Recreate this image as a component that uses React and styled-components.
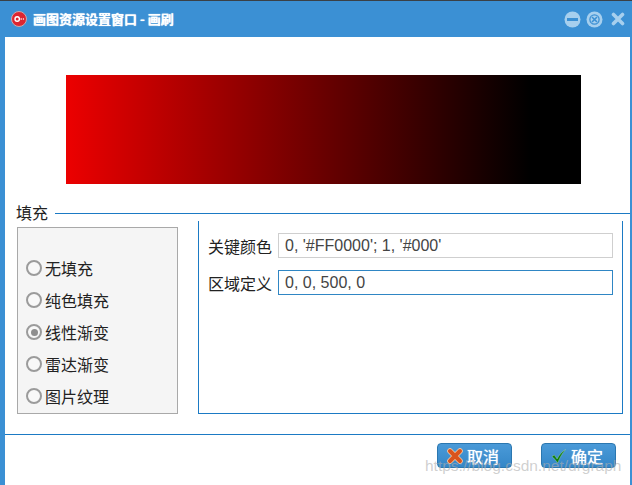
import React from "react";
import styled, { createGlobalStyle } from "styled-components";

const Global = createGlobalStyle`
  html, body { margin: 0; padding: 0; background: #fff; }
  body { font-family: "Liberation Sans", "Noto Sans CJK SC", sans-serif; }
`;

const Win = styled.div`
  position: relative;
  width: 632px;
  height: 485px;
  box-sizing: border-box;
  display: flex;
  flex-direction: column;
  border-top: 1px solid #3a4046;
  background: #fff;
  overflow: hidden;
`;
const TitleBar = styled.div`
  height: 36px;
  flex: none;
  background: #3b90d4;
  display: flex;
  align-items: center;
  padding: 0 7px 0 11px;
  gap: 6px;
`;
const Title = styled.div`
  flex: 1;
  color: #fff;
  font: bold 13px "Noto Sans CJK SC", sans-serif;
  text-shadow: 0 0 1px #fff;
  white-space: nowrap;
  position: relative;
  top: -1px;
`;
const WinButtons = styled.div`
  display: flex;
  align-items: center;
  gap: 5px;
`;
const Body = styled.div`
  flex: 1;
  display: flex;
  flex-direction: column;
  border-left: 5px solid #3b90d4;
  border-right: 2px solid #3b90d4;
  min-height: 0;
`;
const Preview = styled.div`
  height: 109px;
  margin: 38px 49px 0 61px;
  background: linear-gradient(90deg, #ec0000 0%, #000 90%);
  flex: none;
`;
const Legend = styled.div`
  display: flex;
  align-items: center;
  margin: 20px 0 0 11px;
  height: 18px;
  gap: 7px;
  flex: none;
`;
const LegendText = styled.span`
  font: 16px/16px "Noto Sans CJK SC", sans-serif;
  color: #222;
  position: relative;
  top: -1px;
`;
const LegendLine = styled.div`
  flex: 1;
  height: 1px;
  background: #1b7ac4;
`;
const Columns = styled.div`
  display: flex;
  height: 192px;
  margin-top: -1px;
  flex: none;
`;
const LeftPanel = styled.div`
  box-sizing: border-box;
  width: 161px;
  height: 187px;
  margin: 6px 0 0 12px;
  background: #f5f5f5;
  border: 1px solid #a9a9a9;
  padding: 24px 0 0 8px;
  display: flex;
  flex-direction: column;
`;
const RadioRow = styled.label`
  display: flex;
  align-items: center;
  height: 32px;
  gap: 3px;
  font: 16px/28px "Noto Sans CJK SC", sans-serif;
  color: #222;
`;
const RadioDot = styled.span`
  box-sizing: border-box;
  width: 16px;
  height: 16px;
  border-radius: 50%;
  border: 2.5px solid #9b9b9b;
  background: #f8f8f8;
  display: flex;
  align-items: center;
  justify-content: center;
  &::after {
    content: "";
    width: 7px;
    height: 7px;
    border-radius: 50%;
    background: ${(p) => (p.$on ? "#8f8f8f" : "transparent")};
  }
`;
const RightPanel = styled.div`
  box-sizing: border-box;
  width: 425px;
  height: 193px;
  margin-left: 20px;
  border: 1px solid #1b7ac4;
  border-top: none;
  padding: 12px 9px 0 9px;
  display: flex;
  flex-direction: column;
  gap: 12px;
`;
const Field = styled.div`
  display: flex;
  align-items: center;
  gap: 6px;
`;
const FieldLabel = styled.span`
  width: 64px;
  flex: none;
  font: 16px/27px "Noto Sans CJK SC", sans-serif;
  height: 25px;
  color: #222;
  white-space: nowrap;
`;
const Input = styled.div`
  box-sizing: border-box;
  width: 335px;
  height: 25px;
  border: 1px solid ${(p) => (p.$focus ? "#2f86c4" : "#cfcfcf")};
  padding-left: 6px;
  font: 16px/24px "Liberation Sans", sans-serif;
  color: #444;
  white-space: nowrap;
`;
const FooterLine = styled.div`
  height: 1px;
  background: #1b7ac4;
  margin-top: 21px;
  flex: none;
`;
const Footer = styled.div`
  display: flex;
  justify-content: flex-end;
  gap: 29px;
  padding: 8px 14px 0 0;
`;
const Btn = styled.div`
  box-sizing: border-box;
  width: 75px;
  height: 25px;
  border: 1px solid #2b77b0;
  border-radius: 4px;
  background: linear-gradient(#4a9ad8, #3587c8);
  color: #fff;
  display: flex;
  align-items: center;
  padding-left: 9px;
  gap: 4px;
  font: 16px/22px "Noto Sans CJK SC", sans-serif;
  text-shadow: 0 0 1px #fff;
`;
const Watermark = styled.div`
  position: absolute;
  left: 425px;
  top: 455px;
  font: 15.5px/20px "Liberation Sans", sans-serif;
  color: rgba(175, 175, 175, 0.6);
  white-space: nowrap;
`;

const AppIcon = () => (
  <svg width="16" height="16" viewBox="0 0 16 16">
    <circle cx="8" cy="8" r="7.5" fill="#dd2530" stroke="#c9a9ad" />
    <circle cx="6.2" cy="8" r="2.2" fill="none" stroke="#fff" strokeWidth="1.4" />
    <circle cx="10.2" cy="8" r="0.8" fill="#fff" />
    <circle cx="12.4" cy="8" r="0.7" fill="#fff" />
  </svg>
);
const MinIcon = () => (
  <svg width="17" height="17" viewBox="0 0 17 17">
    <circle cx="8.5" cy="8.5" r="8" fill="#a6cfee" />
    <rect x="3" y="7" width="11" height="3" fill="#3b90d4" />
  </svg>
);
const RestoreIcon = () => (
  <svg width="17" height="17" viewBox="0 0 17 17">
    <circle cx="8.5" cy="8.5" r="8" fill="#a6cfee" />
    <circle cx="8.5" cy="8.5" r="4.6" fill="none" stroke="#3b90d4" strokeWidth="1.3" />
    <path d="M6 6l5 5M11 6l-5 5" stroke="#3b90d4" strokeWidth="1.6" />
  </svg>
);
const CloseIcon = () => (
  <svg width="14" height="14" viewBox="0 0 14 14" style={{ marginLeft: 3 }}>
    <path d="M2.5 2.5l9 9M11.5 2.5l-9 9" stroke="#a6cfee" strokeWidth="3.6" strokeLinecap="round" />
  </svg>
);
const CancelIcon = () => (
  <svg width="16" height="16" viewBox="0 0 16 16">
    <path d="M3 3l10 10M13 3L3 13" stroke="#f6c7a0" strokeWidth="5.6" strokeLinecap="round" />
    <path d="M3 3l10 10M13 3L3 13" stroke="#d9541e" strokeWidth="4" strokeLinecap="round" />
  </svg>
);
const OkIcon = () => (
  <svg width="16" height="16" viewBox="0 0 17 16">
    <path d="M1 8.5l2.5-1.5 3 4.2C8.5 7 11.5 3.5 15.5 1 12 5 9.5 9.5 7 15.5 5 12.5 3.2 10.3 1 8.5z" fill="#0b7d0b" stroke="#bfe0b0" strokeWidth="0.4" />
  </svg>
);

const fills = ["无填充", "纯色填充", "线性渐变", "雷达渐变", "图片纹理"];

export default function App() {
  return (
    <Win>
      <Global />
      <TitleBar>
        <AppIcon />
        <Title>画图资源设置窗口 - 画刷</Title>
        <WinButtons>
          <MinIcon />
          <RestoreIcon />
          <CloseIcon />
        </WinButtons>
      </TitleBar>
      <Body>
        <Preview />
        <Legend>
          <LegendText>填充</LegendText>
          <LegendLine />
        </Legend>
        <Columns>
          <LeftPanel>
            {fills.map((f, i) => (
              <RadioRow key={f}>
                <RadioDot $on={i === 2} />
                {f}
              </RadioRow>
            ))}
          </LeftPanel>
          <RightPanel>
            <Field>
              <FieldLabel>关键颜色</FieldLabel>
              <Input>0, '#FF0000'; 1, '#000'</Input>
            </Field>
            <Field>
              <FieldLabel>区域定义</FieldLabel>
              <Input $focus>0, 0, 500, 0</Input>
            </Field>
          </RightPanel>
        </Columns>
        <FooterLine />
        <Footer>
          <Btn><CancelIcon />取消</Btn>
          <Btn><OkIcon />确定</Btn>
        </Footer>
      </Body>
      <Watermark>https://blog.csdn.net/drgraph</Watermark>
    </Win>
  );
}
